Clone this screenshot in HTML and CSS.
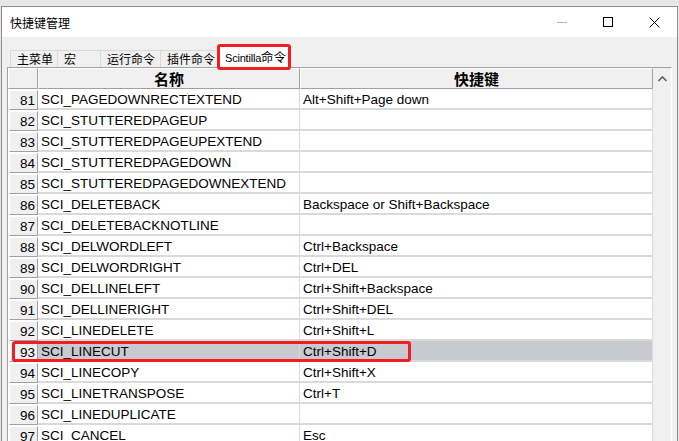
FILE: index.html
```html
<!DOCTYPE html>
<html>
<head>
<meta charset="utf-8">
<link rel="stylesheet" href="styles.css">
</head>
<body>
<div class="window">
  <div class="titlebar">
    <span class="title">快捷键管理</span>
    <div class="caption">
      <div class="cbtn"><svg width="10" height="10" viewBox="0 0 10 10"><line x1="0" y1="5.5" x2="10" y2="5.5" stroke="#b4b4b4" stroke-width="1"/></svg></div>
      <div class="cbtn"><svg width="10" height="10" viewBox="0 0 10 10"><rect x="0.5" y="0.5" width="9" height="9" fill="none" stroke="#000" stroke-width="1"/></svg></div>
      <div class="cbtn"><svg width="11" height="11" viewBox="0 0 11 11"><path d="M0.5 0.5 L10.5 10.5 M10.5 0.5 L0.5 10.5" stroke="#000" stroke-width="1" fill="none"/></svg></div>
    </div>
  </div>
  <div class="content">
    <div class="tabs">
      <div class="tab t1">主菜单</div>
      <div class="tab t2">宏</div>
      <div class="tab t3">运行命令</div>
      <div class="tab t4">插件命令</div>
      <div class="tab t5 active"><span class="latin">Scintilla</span>命令</div>
    </div>
    <div class="gridbox">
      <div class="grid">
        <div class="hrow">
          <div class="hcell corner"></div>
          <div class="hcell">名称</div>
          <div class="hcell">快捷键</div>
        </div>
        <div class="row"><div class="num">81</div><div class="cell">SCI_PAGEDOWNRECTEXTEND</div><div class="cell">Alt+Shift+Page down</div></div>
        <div class="row"><div class="num">82</div><div class="cell">SCI_STUTTEREDPAGEUP</div><div class="cell"></div></div>
        <div class="row"><div class="num">83</div><div class="cell">SCI_STUTTEREDPAGEUPEXTEND</div><div class="cell"></div></div>
        <div class="row"><div class="num">84</div><div class="cell">SCI_STUTTEREDPAGEDOWN</div><div class="cell"></div></div>
        <div class="row"><div class="num">85</div><div class="cell">SCI_STUTTEREDPAGEDOWNEXTEND</div><div class="cell"></div></div>
        <div class="row"><div class="num">86</div><div class="cell">SCI_DELETEBACK</div><div class="cell">Backspace or Shift+Backspace</div></div>
        <div class="row"><div class="num">87</div><div class="cell">SCI_DELETEBACKNOTLINE</div><div class="cell"></div></div>
        <div class="row"><div class="num">88</div><div class="cell">SCI_DELWORDLEFT</div><div class="cell">Ctrl+Backspace</div></div>
        <div class="row"><div class="num">89</div><div class="cell">SCI_DELWORDRIGHT</div><div class="cell">Ctrl+DEL</div></div>
        <div class="row"><div class="num">90</div><div class="cell">SCI_DELLINELEFT</div><div class="cell">Ctrl+Shift+Backspace</div></div>
        <div class="row"><div class="num">91</div><div class="cell">SCI_DELLINERIGHT</div><div class="cell">Ctrl+Shift+DEL</div></div>
        <div class="row"><div class="num">92</div><div class="cell">SCI_LINEDELETE</div><div class="cell">Ctrl+Shift+L</div></div>
        <div class="row selected"><div class="num">93</div><div class="cell">SCI_LINECUT</div><div class="cell">Ctrl+Shift+D</div></div>
        <div class="row"><div class="num">94</div><div class="cell">SCI_LINECOPY</div><div class="cell">Ctrl+Shift+X</div></div>
        <div class="row"><div class="num">95</div><div class="cell">SCI_LINETRANSPOSE</div><div class="cell">Ctrl+T</div></div>
        <div class="row"><div class="num">96</div><div class="cell">SCI_LINEDUPLICATE</div><div class="cell"></div></div>
        <div class="row"><div class="num">97</div><div class="cell">SCI_CANCEL</div><div class="cell">Esc</div></div>
      </div>
      <div class="vscroll">
        <svg class="arrow" width="9" height="6" viewBox="0 0 9 6"><path d="M0.5 5 L4.5 1 L8.5 5" stroke="#606060" stroke-width="1.6" fill="none"/></svg>
      </div>
    </div>
  </div>
</div>
</body>
</html>
```
FILE: styles.css
```css
html, body {
  margin: 0;
  padding: 0;
  width: 679px;
  height: 441px;
  overflow: hidden;
  background: #e6e6e6;
}
.window {
  margin: 6px 0 0 1px;
  width: 675px;
  height: 440px;
  border: 1px solid #8c8c8c;
  border-bottom: none;
  background: #f0f0f0;
  display: flex;
  flex-direction: column;
}
.titlebar {
  height: 30px;
  background: #fff;
  display: flex;
  align-items: center;
  justify-content: space-between;
}
.title {
  padding-left: 8px;
  font: 12px "Noto Sans CJK SC", "Liberation Sans", sans-serif;
  color: #000;
}
.caption {
  display: flex;
  height: 30px;
}
.cbtn {
  width: 46px;
  height: 30px;
  display: flex;
  align-items: center;
  justify-content: center;
}
.content {
  flex: 1;
  display: flex;
  flex-direction: column;
}
.tabs {
  height: 30px;
  display: flex;
  align-items: flex-end;
  padding-left: 8px;
}
.tab {
  box-sizing: border-box;
  height: 17px;
  border: 1px solid #d9d9d9;
  border-bottom: none;
  border-right: none;
  padding-left: 6px;
  font: 12px/16px "Noto Sans CJK SC", "Liberation Sans", sans-serif;
  color: #000;
  white-space: nowrap;
}
.t1 { width: 47px; }
.t2 { width: 43px; }
.t3 { width: 60px; }
.t4 { width: 58px; border-right: 1px solid #d9d9d9; }
.t5 { width: 72px; }
.tab.active {
  position: relative;
  height: 21px;
  background: #fff;
  border: 1px solid #d9d9d9;
  border-bottom: none;
  padding-left: 6px;
  line-height: 20px;
  font-size: 12.5px;
}
.latin {
  font: 11px "Liberation Sans", Arial, sans-serif;
  letter-spacing: -0.2px;
}
.tab.active::after {
  content: "";
  position: absolute;
  box-sizing: border-box;
  left: -2px;
  top: -3px;
  width: 74px;
  height: 26px;
  border: 3px solid #f01e1e;
  border-radius: 3px;
}
.gridbox {
  flex: 1;
  margin-left: 5px;
  width: 665px;
  box-sizing: border-box;
  border-top: 1px solid #a0a0a0;
  border-left: 1px solid #a0a0a0;
  border-right: 1px solid #fff;
  display: flex;
  overflow: hidden;
}
.grid {
  width: 645px;
  background: #fff;
}
.hrow, .row {
  display: grid;
  grid-template-columns: 30px 262px 353px;
  height: 21px;
}
.hcell {
  box-sizing: border-box;
  background: #f0f0f0;
  border-top: 1px solid #fff;
  border-left: 1px solid #fff;
  border-right: 1px solid #a0a0a0;
  border-bottom: 1px solid #a0a0a0;
  text-align: center;
  font: bold 15px/19px "Noto Sans CJK SC", "Liberation Sans", sans-serif;
  color: #000;
}
.row {
  position: relative;
  font: 13.5px/15px "Liberation Sans", Arial, sans-serif;
  color: #000;
}
.num {
  box-sizing: border-box;
  background: #f0f0f0;
  border-top: 1px solid #fff;
  border-left: 1px solid #fff;
  border-right: 1px solid #a0a0a0;
  border-bottom: 1px solid #a0a0a0;
  margin: 1px 0 0 1px;
  text-align: right;
  padding: 2px 2px 0 0;
}
.cell {
  box-sizing: border-box;
  border-bottom: 2px solid #dadada;
  border-right: 1px solid #dadada;
  padding: 3px 0 0 3px;
  white-space: nowrap;
  overflow: hidden;
}
.row.selected .cell {
  background: #c9c9d1;
}
.row.selected::after {
  content: "";
  position: absolute;
  box-sizing: border-box;
  left: 4px;
  top: 0;
  width: 399px;
  height: 21px;
  border: 3px solid #f01e1e;
  border-radius: 3px;
}
.vscroll {
  flex: 1;
  background: #f0f0f0;
  display: flex;
  justify-content: center;
  padding-top: 8px;
}
.arrow {
  display: block;
}
```
